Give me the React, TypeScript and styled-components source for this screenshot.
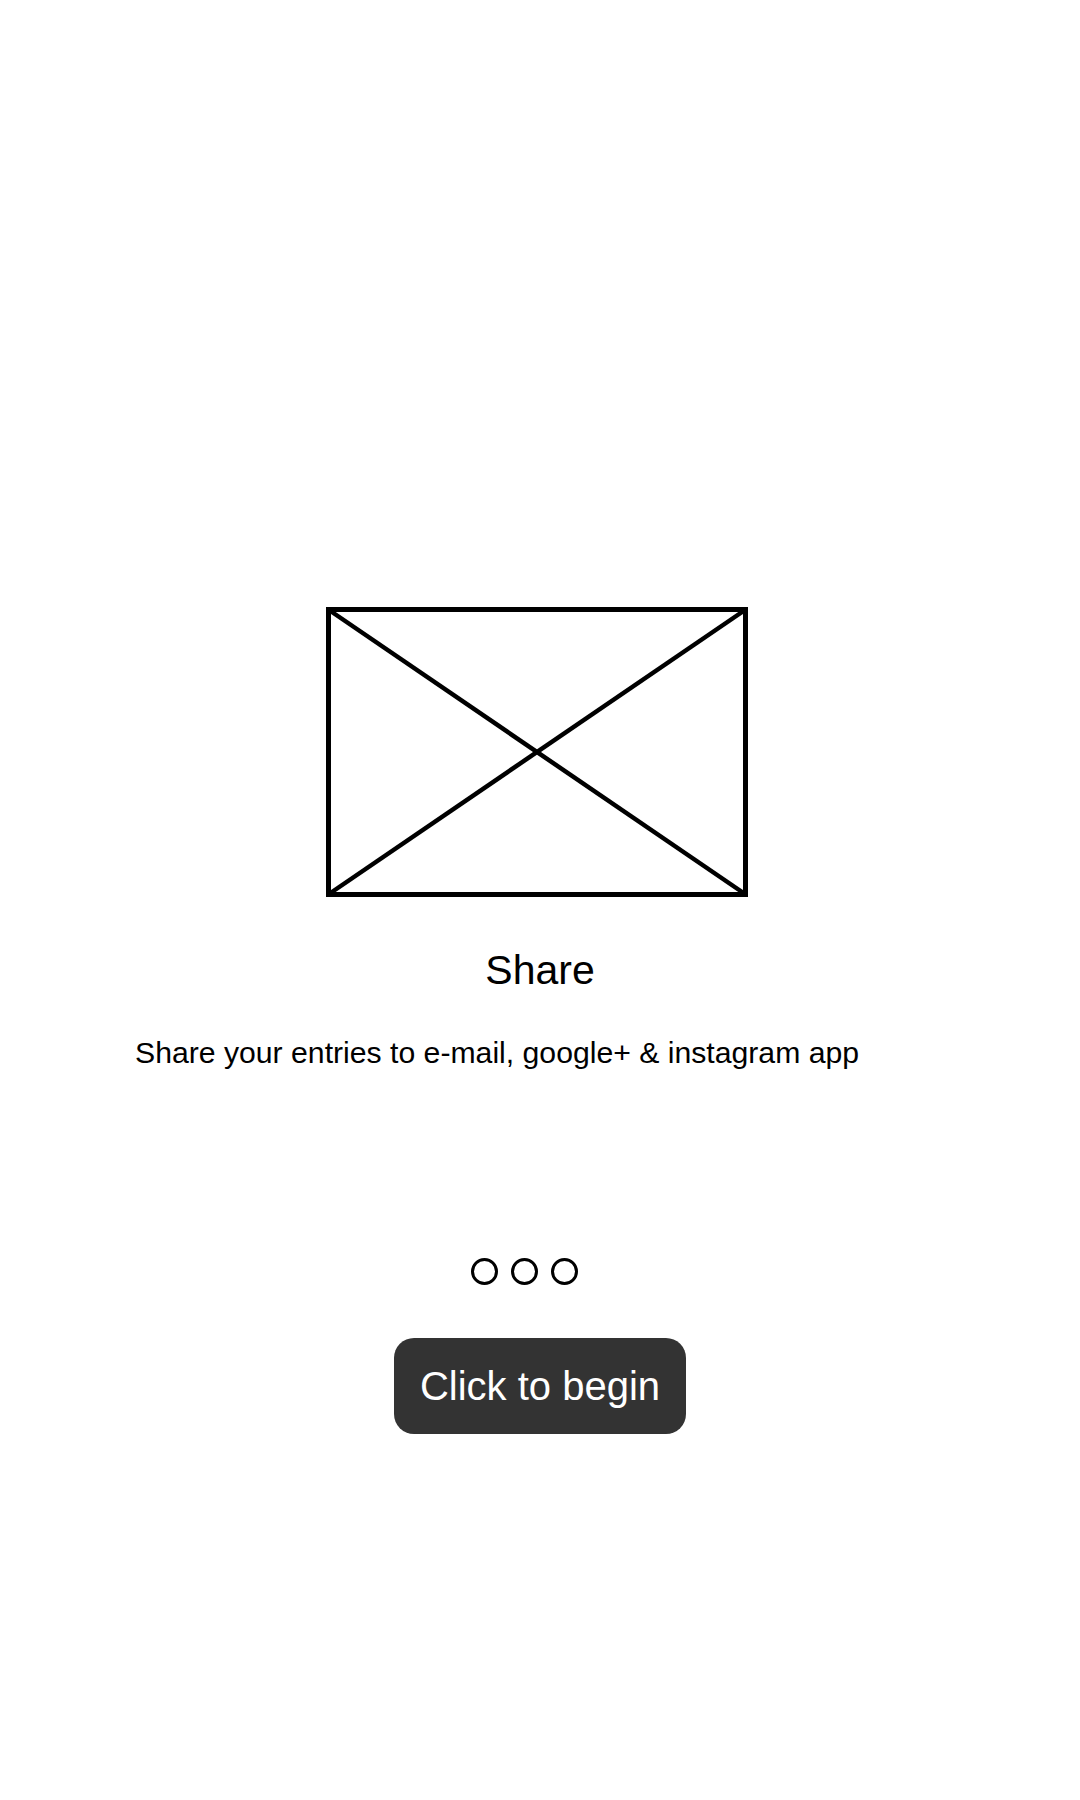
import React from 'react'
import styled, { createGlobalStyle } from 'styled-components'

const GlobalStyle = createGlobalStyle`
  html, body {
    margin: 0;
    padding: 0;
    background: #ffffff;
  }
  body {
    font-family: "Liberation Sans", Arial, sans-serif;
    color: #000000;
  }
`

const Screen = styled.div`
  width: 1080px;
  min-height: 1800px;
  display: flex;
  flex-direction: column;
  align-items: center;
  padding-top: 607px;
  box-sizing: border-box;
`

const Placeholder = styled.svg`
  display: block;
  width: 422px;
  height: 290px;
  margin-right: 6px;
`

const Title = styled.h1`
  margin: 50px 0 0;
  font-size: 41px;
  line-height: 46px;
  font-weight: 400;
  text-align: center;
`

const Description = styled.p`
  align-self: stretch;
  margin: 43px 0 0;
  padding: 0 135px;
  font-size: 30.2px;
  line-height: 34px;
  text-align: left;
`

const Dots = styled.div`
  display: flex;
  gap: 13px;
  margin-top: 188px;
  margin-right: 32px;
`

const Dot = styled.span<{ $active?: boolean }>`
  width: 27px;
  height: 27px;
  box-sizing: border-box;
  border-radius: 50%;
  border: 3px solid #000000;
  background: ${p => (p.$active ? '#000000' : 'transparent')};
`

const BeginButton = styled.button`
  margin-top: 53px;
  height: 96px;
  padding: 0 26px;
  border: none;
  border-radius: 20px;
  background: #333333;
  color: #ffffff;
  font-family: "Liberation Sans", Arial, sans-serif;
  font-size: 40px;
  line-height: 96px;
  cursor: pointer;
`

const slides = [0, 1, 2]

export default function App() {
  return (
    <>
      <GlobalStyle />
      <Screen>
        <Placeholder viewBox="0 0 422 290" aria-hidden="true">
          <rect x="2.5" y="2.5" width="417" height="285" fill="none" stroke="#000" strokeWidth="5" />
          <line x1="3" y1="3" x2="419" y2="287" stroke="#000" strokeWidth="4.5" />
          <line x1="419" y1="3" x2="3" y2="287" stroke="#000" strokeWidth="4.5" />
        </Placeholder>
        <Title>Share</Title>
        <Description>Share your entries to e-mail, google+ &amp; instagram app</Description>
        <Dots>
          {slides.map(i => (
            <Dot key={i} />
          ))}
        </Dots>
        <BeginButton>Click to begin</BeginButton>
      </Screen>
    </>
  )
}
